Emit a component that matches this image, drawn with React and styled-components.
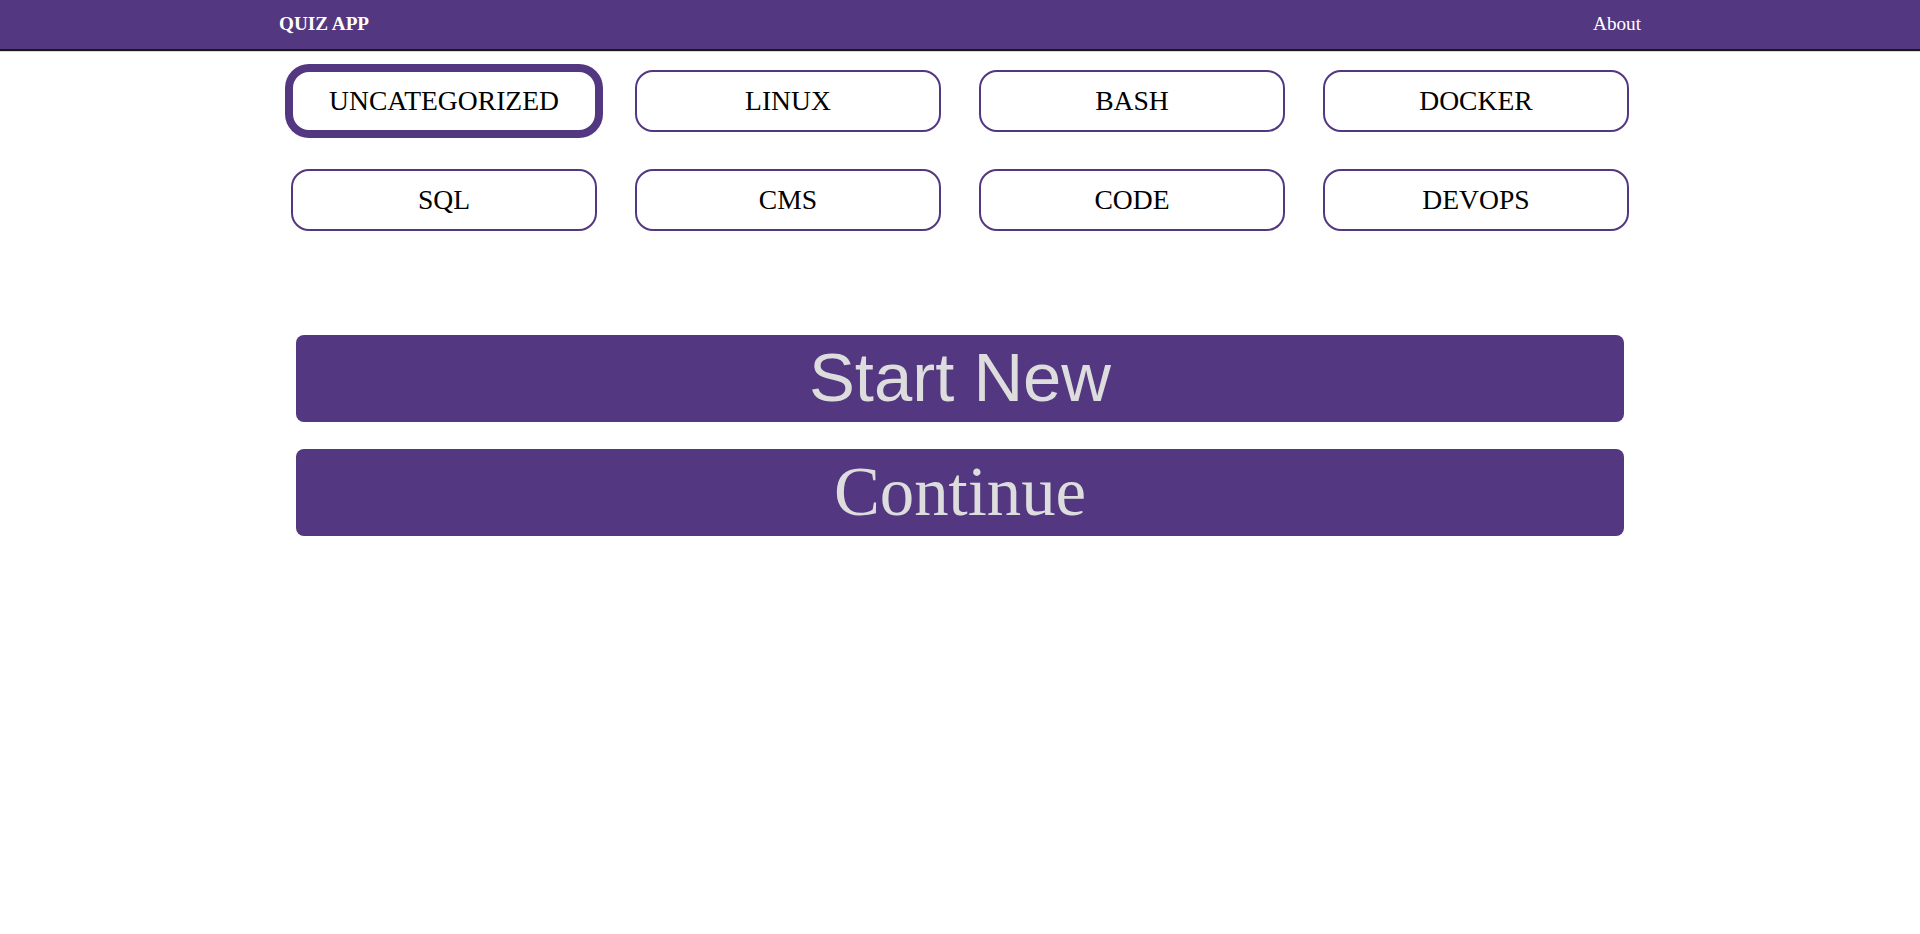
import React, { useState } from "react";
import styled, { createGlobalStyle } from "styled-components";

const purple = "#533780";

const GlobalStyle = createGlobalStyle`
  body {
    margin: 0;
    background: #fff;
    font-family: "Liberation Serif", "Times New Roman", serif;
  }
`;

const categories = ["UNCATEGORIZED", "LINUX", "BASH", "DOCKER", "SQL", "CMS", "CODE", "DEVOPS"];

function App() {
  const [selected, setSelected] = useState("UNCATEGORIZED");

  return (
    <>
      <GlobalStyle />
      <Navbar>
        <div className="inner">
          <Brand>QUIZ APP</Brand>
          <NavLink href="#">About</NavLink>
        </div>
      </Navbar>
      <Main>
        <CategoryGrid>
          {categories.map((c) => (
            <CategoryButton
              key={c}
              $active={selected === c}
              onClick={() => setSelected(c)}
            >
              {c}
            </CategoryButton>
          ))}
        </CategoryGrid>
        <Actions>
          <ActionButton $sans>Start New</ActionButton>
          <ActionButton>Continue</ActionButton>
        </Actions>
      </Main>
    </>
  );
}

const Navbar = styled.nav`
  height: 49px;
  background-color: ${purple};
  box-shadow: 0 2px 1px rgba(0, 0, 0, 0.9);
  .inner {
    width: 1362px;
    height: 100%;
    margin: 0 auto;
    padding-bottom: 2px;
    box-sizing: border-box;
    display: flex;
    align-items: center;
    justify-content: space-between;
  }
`;

const Brand = styled.h3`
  margin: 0;
  color: #fff;
  font-size: 19.2px;
  font-weight: bold;
`;

const NavLink = styled.a`
  color: #fff;
  font-size: 19.2px;
  text-decoration: none;
`;

const Main = styled.main`
  width: 1338px;
  margin: 21px auto 0;
`;

const CategoryGrid = styled.div`
  display: grid;
  grid-template-columns: repeat(4, 1fr);
  column-gap: 38px;
  row-gap: 37px;
`;

const CategoryButton = styled.button`
  height: 62px;
  background: #fff;
  border: 2px solid ${purple};
  border-radius: 18px;
  box-shadow: ${(p) => (p.$active ? `0 0 0 6px ${purple}` : "none")};
  color: #000;
  font-family: "Liberation Serif", "Times New Roman", serif;
  font-size: 27.6px;
  cursor: pointer;
  padding: 0;
`;

const Actions = styled.div`
  width: 1328px;
  margin: 104px auto 0;
  display: flex;
  flex-direction: column;
  gap: 27px;
`;

const ActionButton = styled.button`
  height: 87px;
  border: none;
  border-radius: 8px;
  background: ${purple};
  color: #dddddd;
  font-family: ${(p) =>
    p.$sans
      ? `"Liberation Sans", Arial, sans-serif`
      : `"Liberation Serif", "Times New Roman", serif`};
  font-size: 68.8px;
  line-height: 1;
  cursor: pointer;
  padding: 0;
`;

export default App;
